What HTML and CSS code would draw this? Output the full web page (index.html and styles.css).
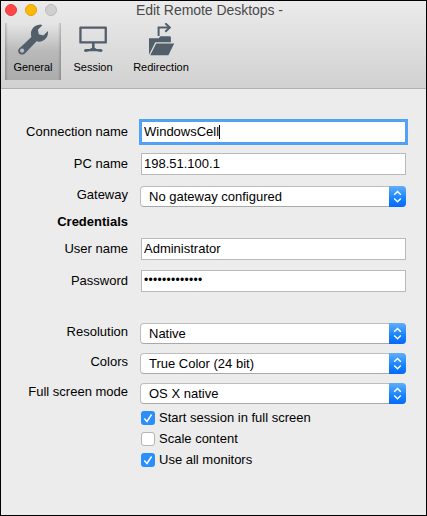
FILE: index.html
```html
<!DOCTYPE html>
<html lang="en">
<head>
<meta charset="utf-8">
<title>Edit Remote Desktops</title>
<link rel="stylesheet" href="styles.css">
</head>
<body>
<svg width="0" height="0" class="defs"><symbol id="arrows" viewBox="0 0 17 21"><path d="M5.2 8.8 8.5 5.5l3.3 3.3M5.2 12.5l3.3 3.3 3.3-3.3" fill="none" stroke="#fff" stroke-width="1.5"/></symbol>
<symbol id="check" viewBox="0 0 14 14"><path d="M3.3 7.5 6 10.5 10.6 3.5" fill="none" stroke="#fff" stroke-width="1.5"/></symbol></svg>
<main class="window">
  <header class="toolbar">
    <div class="titlebar">
      <div class="lights"><i class="light red"></i><i class="light yellow"></i><i class="light gray"></i></div>
      <h1 class="title">Edit Remote Desktops -</h1>
    </div>
    <nav class="tabs">
      <div class="tab active">
        <svg class="icon" viewBox="0 0 32 34" width="32" height="34"><path fill="#525e69" fill-rule="evenodd" d="M2.2 25.6 14.4 13.9C12.6 8 16 1.7 23.6 1.4l1.8.8-4.5 4.6.9 4.5 4.6 1.1 4.6-4.4c.8 7-5 12-11.4 10.3L8.4 30c-2 2.2-5 2-6.5.2-1.2-1.5-1-3.3.3-4.6zM5.1 25.5a2.1 2.1 0 1 0 .01 0z"/></svg>
        <span class="tab-label">General</span>
      </div>
      <div class="tab session">
        <svg class="icon" viewBox="0 0 32 34" width="32" height="34"><path fill="#525e69" fill-rule="evenodd" d="M3.5 3.4h25.2q1.2 0 1.2 1.2v14.8q0 1.2-1.2 1.2H17.6v4.2l2.2 1.2h4q1.8 0 1.8 1.6 0 1.4-1.6 1.4l-4.4-.8h-6.8L8.4 29Q7 29 7 27.6 7 26 8.8 26h4l2.2-1.2v-4.2H3.5q-1.2 0-1.2-1.2V4.6Q2.3 3.4 3.5 3.4zM4.6 5.8v12.4h23V5.8z"/></svg>
        <span class="tab-label">Session</span>
      </div>
      <div class="tab redirection">
        <svg class="icon" viewBox="0 0 32 34" width="32" height="34"><path d="M13.6 13V4.5H24" fill="none" stroke="#525e69" stroke-width="2"/><path d="M20.3.3 24.8 4.5 20.3 8.8" fill="none" stroke="#525e69" stroke-width="2"/><path fill="#525e69" d="M4 15.2h9.7l1.7-1.9h9.2q1.3 0 1.3 1.3v4.7H10.3L4 31.7zM11.2 20.6h18L23.4 32.2H5.2z"/></svg>
        <span class="tab-label">Redirection</span>
      </div>
    </nav>
  </header>
  <section class="form">
    <div class="label">Connection name</div><div class="field focused">WindowsCell<i class="caret"></i></div>
    <div class="label">PC name</div><div class="field">198.51.100.1</div>
    <div class="label high">Gateway</div><div class="select">No gateway configured<svg class="stepper"><use href="#arrows"/></svg></div>
    <div class="label heading">Credentials</div><div></div>
    <div class="label">User name</div><div class="field">Administrator</div>
    <div class="label">Password</div><div class="field"><span class="dots">•••••••••••••</span></div>
    <div class="label high">Resolution</div><div class="select">Native<svg class="stepper"><use href="#arrows"/></svg></div>
    <div class="label high">Colors</div><div class="select">True Color (24 bit)<svg class="stepper"><use href="#arrows"/></svg></div>
    <div class="label high">Full screen mode</div><div class="select">OS X native<svg class="stepper"><use href="#arrows"/></svg></div>
    <div class="option"><svg class="box on"><use href="#check"/></svg>Start session in full screen</div>
    <div class="option"><i class="box"></i>Scale content</div>
    <div class="option"><svg class="box on"><use href="#check"/></svg>Use all monitors</div>
  </section>
</main>
</body>
</html>
```

FILE: styles.css
```css
* { box-sizing: border-box; }
body {
  margin: 0;
  font: 13px/17px "Liberation Sans", Arial, sans-serif;
  color: #000;
}
.defs { position: absolute; }
.window {
  width: 427px;
  height: 516px;
  border: 1px solid #000;
  background: #ececec;
  overflow: hidden;
}
.toolbar {
  height: 88px;
  background: linear-gradient(#ebebeb, #d1d1d1);
  border-bottom: 1px solid #b1b1b1;
}
.titlebar {
  display: grid;
  grid-template-columns: 135px 1fr;
  height: 22px;
}
.lights { display: flex; gap: 8px; padding: 3px 0 0 4px; }
.light { width: 12px; height: 12px; border-radius: 50%; border: 1px solid; }
.red { background: #fc4648; border-color: #e33e41; }
.yellow { background: #fdb904; border-color: #e0a20e; }
.gray { background: #cfcfcf; border-color: #bababa; }
.title {
  margin: 0;
  font-size: 14px;
  font-weight: 400;
  line-height: 18px;
  letter-spacing: -0.04px;
  color: #4a4a4a;
}
.tabs { display: flex; padding-left: 4px; }
.tab {
  width: 56px;
  height: 57px;
  display: flex;
  flex-direction: column;
  align-items: center;
  font-size: 11px;
  line-height: 14px;
}
.tab.active {
  background:
    linear-gradient(90deg, rgba(0,0,0,.2), transparent 3px, transparent 53px, rgba(0,0,0,.2)),
    linear-gradient(#e6e6e6, #b9b9b9 50%, #acacac);
}
.session { margin-left: 4px; }
.redirection { width: 64px; margin-left: 8px; }
.icon { flex: none; }
.tab-label { margin-top: 3px; white-space: nowrap; }
.form {
  display: grid;
  grid-template-columns: 127px 266px;
  column-gap: 12px;
  grid-template-rows: 32px 33px 25px 27px 32px 53px 30px 30px 28px 21px 21px 21px;
  padding-top: 32px;
}
.label { text-align: right; padding-top: 2px; }
.label.high { padding-top: 0; }
.heading { font-weight: 700; }
.field {
  display: flex;
  height: 22px;
  margin-left: 1px;
  padding-left: 2px;
  border: 1px solid #b9b9b9;
  background: #fff;
  line-height: 19px;
}
.field.focused {
  border-color: #51a2f7;
  box-shadow: 0 0 0 2px #51a2f7;
}
.focused .caret { width: 1px; height: 14px; margin-top: 3px; background: #000; }
.dots { font-size: 12px; letter-spacing: 0.3px; }
.select {
  display: flex;
  justify-content: space-between;
  height: 21px;
  padding-left: 8px;
  border: 1px solid #bebebe;
  border-bottom-color: #a9a9a9;
  border-radius: 4px;
  background: #fff;
  line-height: 19px;
}
.stepper {
  width: 17px;
  height: 21px;
  margin: -1px;
  border-radius: 0 4px 4px 0;
  background: linear-gradient(#60aefa, #1683fe 60%, #0868fb);
}
.option {
  grid-column: 2;
  display: flex;
  gap: 4px;
  margin-left: 1px;
  line-height: 13px;
}
.box {
  width: 14px;
  height: 14px;
  border: 1px solid #b5b5b5;
  border-radius: 3px;
  background: #fff;
}
.box.on { border: 0; background: #2a8ffb; }
```
